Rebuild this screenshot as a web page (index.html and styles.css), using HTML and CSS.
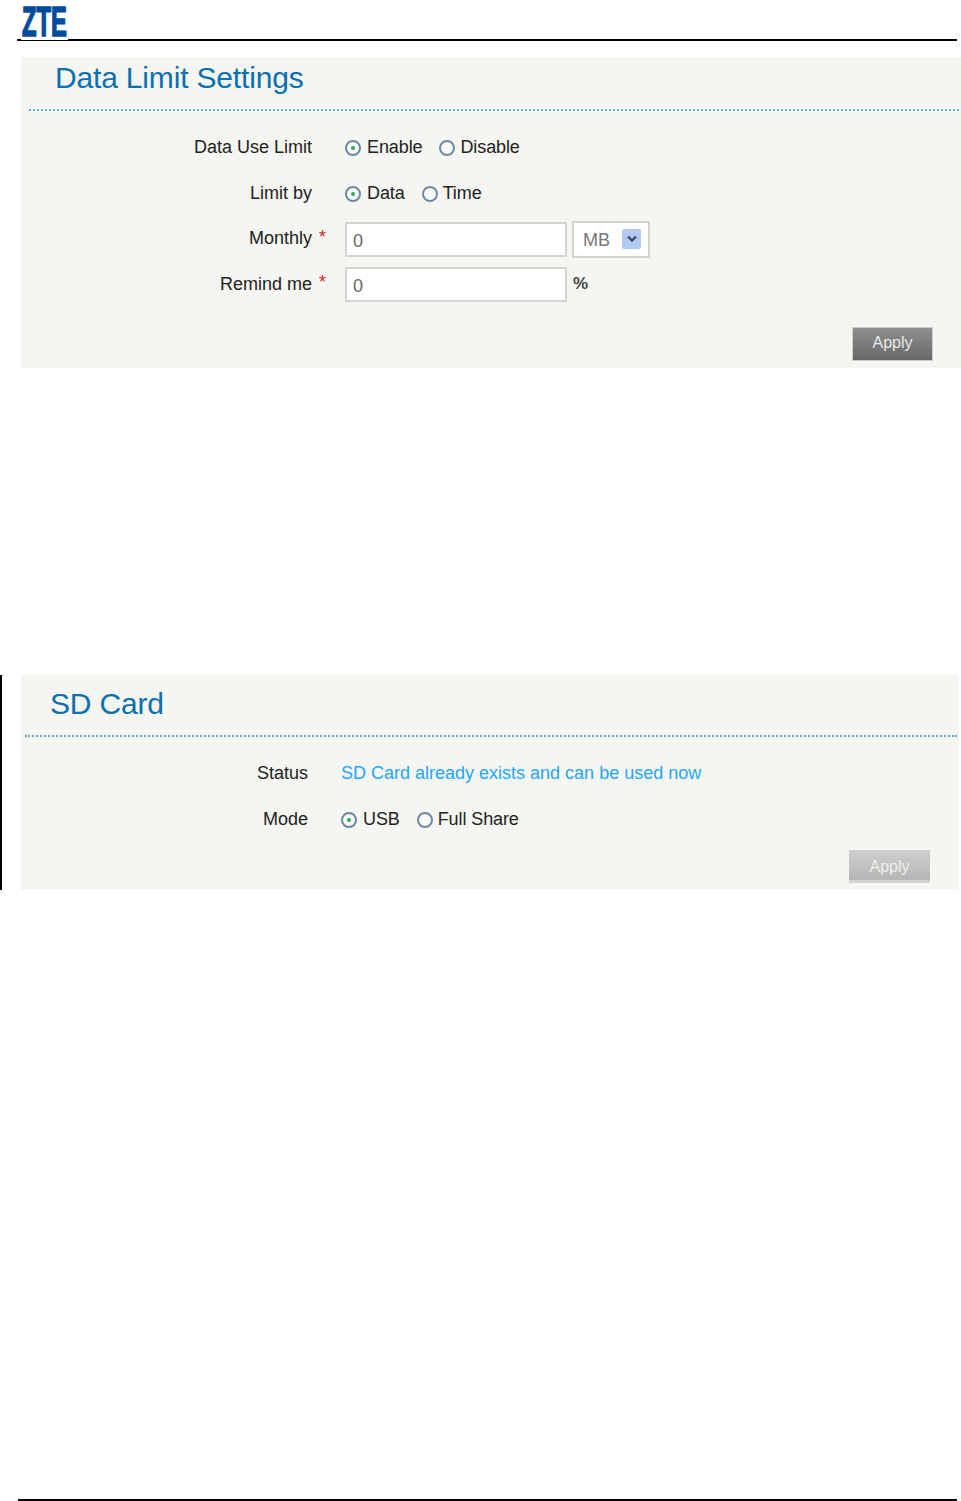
FILE: index.html
```html
<!DOCTYPE html>
<html lang="en">
<head>
  <meta charset="UTF-8" />
  <title>Data Limit Settings</title>
  <link rel="stylesheet" href="styles.css">
</head>
<body>

<div class="page-head">
  <svg class="logo" width="47" height="35" viewBox="0 0 47 35" role="img" aria-label="ZTE">
    <text transform="translate(1 30.5) scale(0.567 1)" x="0" y="0">ZTE</text>
  </svg>
</div>

<div class="panel panel-limit">
  <h1 class="panel-title">Data Limit Settings</h1>
  <div class="form-grid">
    <div class="label">Data Use Limit</div>
    <div class="star"></div>
    <div class="field">
      <span class="radio-item"><span class="radio on"></span>Enable</span>
      <span class="radio-item"><span class="radio"></span>Disable</span>
    </div>

    <div class="label">Limit by</div>
    <div class="star"></div>
    <div class="field">
      <span class="radio-item"><span class="radio on"></span>Data</span>
      <span class="radio-item"><span class="radio"></span>Time</span>
    </div>

    <div class="label">Monthly</div>
    <div class="star">*</div>
    <div class="field">
      <div class="text-input">0</div>
      <div class="select">
        <span>MB</span>
        <span class="select-arrow">
          <svg width="12" height="8" viewBox="0 0 12 8"><path d="M2 1.5 L6 5.5 L10 1.5" fill="none" stroke="#3b4a6b" stroke-width="2.4"/></svg>
        </span>
      </div>
    </div>

    <div class="label">Remind me</div>
    <div class="star">*</div>
    <div class="field">
      <div class="text-input">0</div>
      <span class="unit">%</span>
    </div>
  </div>
  <div class="actions">
    <button class="btn">Apply</button>
  </div>
</div>

<div class="sd-wrap">
  <div class="panel panel-sd">
    <h1 class="panel-title">SD Card</h1>
    <div class="form-grid">
      <div class="label">Status</div>
      <div class="star"></div>
      <div class="field status-text">SD Card already exists and can be used now</div>

      <div class="label">Mode</div>
      <div class="star"></div>
      <div class="field">
        <span class="radio-item"><span class="radio on"></span>USB</span>
        <span class="radio-item"><span class="radio"></span>Full Share</span>
      </div>
    </div>
    <div class="actions">
      <button class="btn btn-disabled">Apply</button>
    </div>
  </div>
</div>

<div class="page-foot"></div>

</body>
</html>
```

FILE: styles.css
```css
body {
  margin: 0;
  height: 1501px;
  background: #fff;
  font-family: "Liberation Sans", Arial, sans-serif;
  font-size: 18px;
  color: #222;
  overflow: hidden;
}

.page-head {
  height: 39px;
  margin: 0 4px 16px 17px;
  padding-left: 4px;
  border-bottom: 2px solid #000;
}

/* white box runs 1px over the rule, the line is thinner under the logo */
.logo {
  display: block;
  position: relative;
  padding-top: 5px;
  background: #fff;
  overflow: visible;
}

.logo text {
  font-family: "Liberation Sans", Arial, sans-serif;
  font-weight: bold;
  font-size: 42px;
  fill: #004b9b;
  stroke: #004b9b;
  stroke-width: 1.6px;
}

.panel {
  background: #f5f5f1;
  position: relative;
}

.panel-limit {
  margin-left: 21px;
  height: 311px;
}

.panel-title {
  margin: 0 2px 0 8px;
  height: 52px;
  padding-left: 26px;
  border-bottom: 2px dotted #6aa8d0;
  font-size: 30px;
  font-weight: normal;
  letter-spacing: -0.17px;
  line-height: 42px;
  color: #0a70b0;
}

.form-grid {
  display: grid;
  grid-template-columns: 291px 33px 1fr;
  grid-auto-rows: 45.5px;
  align-items: center;
  padding-top: 14px;
}

.label {
  text-align: right;
}

.star {
  color: #e02020;
  padding-left: 7px;
  line-height: 1;
  margin-top: -4px;
}

.field {
  display: flex;
  align-items: center;
  gap: 17px;
}

.radio-item {
  display: flex;
  align-items: center;
  letter-spacing: -0.1px;
}

.radio {
  width: 12px;
  height: 12px;
  margin: 1px 6px 0 0;
  border: 2px solid #6a8ba1;
  border-radius: 50%;
  background: #f8f8f6;
  position: relative;
}

.radio-item + .radio-item .radio {
  margin-right: 5px;
}

.radio.on::after {
  content: "";
  position: absolute;
  left: 4px;
  top: 4px;
  width: 4px;
  height: 4px;
  border-radius: 50%;
  background: #2fa85c;
}

.text-input {
  width: 212px;
  height: 31px;
  margin-top: 1px;
  padding-left: 6px;
  border: 2px solid #d4d4d0;
  background: #fff;
  line-height: 35px;
  color: #666;
}

.select {
  display: flex;
  align-items: center;
  justify-content: space-between;
  width: 67px;
  height: 33px;
  margin: 1px 0 0 -12px;
  padding: 0 7px 0 0;
  border: 2px solid #d4d4d0;
  background: #fff;
  color: #777;
}

.select > span:first-child {
  padding: 2px 0 0 9px;
}

.select-arrow {
  display: flex;
  align-items: center;
  justify-content: center;
  width: 19px;
  height: 20px;
  border-radius: 2px;
  background: #b4c9f2;
}

.unit {
  margin: 0 0 0 -11px;
  font-weight: bold;
  font-size: 17px;
  color: #444;
}

.status-text {
  color: #22a8fb;
}

.actions {
  position: absolute;
  right: 28px;
  bottom: 7px;
}

.btn {
  display: block;
  width: 81px;
  height: 34px;
  padding: 0 0 2px;
  border: 1px solid #cfcfcb;
  background: linear-gradient(#8f8f8f, #686868);
  font-family: inherit;
  font-size: 16px;
  color: #e8e8e8;
}

.btn-disabled {
  height: 33px;
  padding: 3px 0 0;
  border: 0;
  border-bottom: 3px solid #d4d4d2;
  background: linear-gradient(#cfcfcf, #b6b6b6);
  color: #eeeeea;
}

.sd-wrap {
  margin-top: 307px;
  margin-right: 2px;
  height: 215px;
  padding-left: 19px;
  border-left: 2px solid #000;
}

.panel-sd {
  height: 215px;
}

.panel-sd .panel-title {
  height: 52px;
  padding: 8px 0 0 25px;
  margin-left: 4px;
}

.panel-sd .form-grid {
  grid-template-columns: 287px 33px 1fr;
}

.panel-sd .actions {
  right: 29px;
}

.page-foot {
  margin: 609px 4px 0 18px;
  border-top: 2px solid #000;
}
```
